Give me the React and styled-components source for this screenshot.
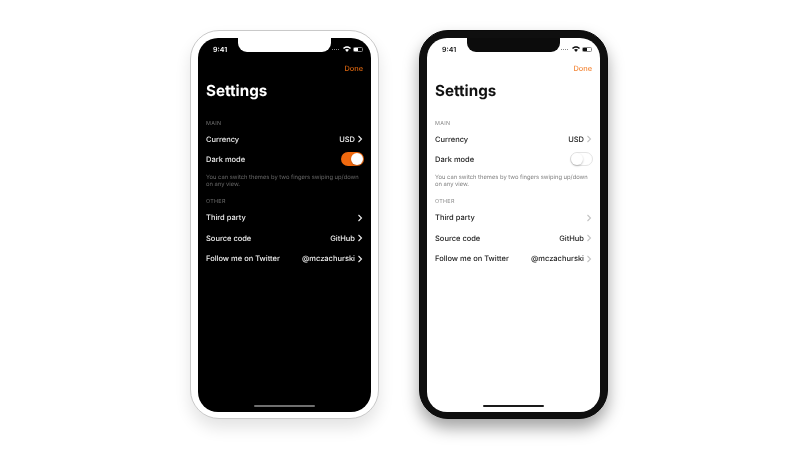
import React from "react";
import styled, { createGlobalStyle } from "styled-components";

const Global = createGlobalStyle`
  html, body { margin: 0; padding: 0; background: #fff; }
  body {
    font-family: "Inter", "Liberation Sans", sans-serif;
    text-rendering: geometricPrecision;
  }
`;

const Stage = styled.div`
  width: 800px;
  height: 450px;
  display: flex;
  justify-content: center;
  align-items: flex-start;
  gap: 40px;
  padding: 30px 2px 0 0;
  box-sizing: border-box;
  overflow: hidden;
`;

const Phone = styled.div`
  width: 189px;
  height: 389px;
  box-sizing: border-box;
  padding: 7px 7px 6px;
  border-radius: 29px;
  flex-shrink: 0;
  background: ${p => (p.$dark ? "#fff" : "#0f0f0f")};
  border: ${p => (p.$dark ? "1px solid #c9c9c9" : "1px solid #0a0a0a")};
  box-shadow: ${p =>
    p.$dark
      ? "0 9px 16px rgba(0,0,0,0.11)"
      : "0 9px 16px rgba(0,0,0,0.36)"};
`;

const Screen = styled.div`
  position: relative;
  height: 100%;
  border-radius: 20px;
  overflow: hidden;
  box-sizing: border-box;
  padding: 0 8px;
  display: flex;
  flex-direction: column;
  will-change: transform;
  background: ${p => (p.$dark ? "#000" : "#fff")};
  color: ${p => (p.$dark ? "#fff" : "#111")};
`;

const Notch = styled.div`
  position: absolute;
  top: 0;
  left: 40px;
  width: 93px;
  height: 14px;
  border-radius: 0 0 9px 9px;
  background: ${p => (p.$dark ? "#fff" : "#0c0c0c")};
`;

const StatusBar = styled.div`
  height: 22px;
  display: flex;
  align-items: center;
  justify-content: space-between;
  padding: 0 0 0 7px;
  font-size: 7px;
  font-weight: 600;
`;

const StatusIcons = styled.div`
  display: flex;
  align-items: center;
  gap: 2px;
`;

const Dots = styled.span`
  width: 8px;
  height: 1px;
  margin-right: 1px;
  background: repeating-linear-gradient(90deg, #888 0 1px, transparent 1px 2px);
`;

const Battery = styled.span`
  width: 10px;
  height: 5px;
  border: 0.5px solid #888;
  border-radius: 1.5px;
  box-sizing: border-box;
  display: flex;
  &::before {
    content: "";
    width: 4px;
    background: ${p => (p.$dark ? "#fff" : "#111")};
  }
`;

const DoneBar = styled.div`
  display: flex;
  justify-content: flex-end;
  margin-top: 3px;
  height: 12px;
  line-height: 12px;
  font-size: 7.4px;
  font-weight: 500;
  color: ${p => (p.$dark ? "#d9640f" : "#f4883a")};
`;

const Title = styled.h1`
  margin: 4px 0 0;
  font-size: 15.2px;
  line-height: 24px;
  font-weight: 700;
`;

const SectionLabel = styled.div`
  font-size: 5.4px;
  line-height: 8px;
  letter-spacing: 0.3px;
  margin-bottom: 1.5px;
  color: ${p => (p.$dark ? "#6f6f6f" : "#8a8a8a")};
  margin-top: ${p => p.$top}px;
`;

const Row = styled.div`
  height: ${p => p.$h || 20}px;
  display: flex;
  align-items: center;
  justify-content: space-between;
  font-size: 7.5px;
  font-weight: 500;
  color: ${p => (p.$dark ? "#f2f2f2" : "#1a1a1a")};
`;

const RowRight = styled.div`
  display: flex;
  align-items: center;
  gap: 2px;
`;

const Chevron = styled.svg`
  width: 6px;
  height: 8px;
  color: ${p => (p.$dark ? "#eee" : "#c4c4c4")};
`;

const Toggle = styled.div`
  width: 23px;
  height: 14px;
  border-radius: 7px;
  box-sizing: border-box;
  margin-right: -1px;
  display: flex;
  justify-content: ${p => (p.$on ? "flex-end" : "flex-start")};
  background: ${p => (p.$on ? "#f0690f" : "#fff")};
  border: ${p => (p.$on ? "none" : "1px solid #e4e4e4")};
  padding: ${p => (p.$on ? "1px" : "0")};
`;

const Knob = styled.div`
  width: 12px;
  height: 12px;
  border-radius: 50%;
  background: #fff;
  box-shadow: 0 1px 2px rgba(0, 0, 0, 0.25);
`;

const Hint = styled.div`
  font-size: 5.8px;
  line-height: 7.4px;
  margin-top: 5px;
  color: ${p => (p.$dark ? "#6a6a6a" : "#7d7d7d")};
`;

const HomeBar = styled.div`
  position: absolute;
  left: 56px;
  bottom: 5px;
  width: 61px;
  height: 2px;
  border-radius: 1px;
  background: ${p => (p.$dark ? "#6f6f6f" : "#1a1a1a")};
`;

const Arrow = ({ dark }) => (
  <Chevron $dark={dark} viewBox="0 0 6 8" fill="none">
    <path d="M1.5 1 L4.5 4 L1.5 7" stroke="currentColor" strokeWidth="1.1" />
  </Chevron>
);

const Wifi = ({ dark }) => (
  <svg width="8" height="6" viewBox="0 0 8 6" fill={dark ? "#fff" : "#111"}>
    <path d="M0 2 C2.3 -0.2 5.7 -0.2 8 2 L7 3 C5.2 1.4 2.8 1.4 1 3 Z" />
    <path d="M2 3.8 C3.2 2.8 4.8 2.8 6 3.8 L4 6 Z" />
  </svg>
);

const LinkRow = ({ dark, label, value, h }) => (
  <Row $dark={dark} $h={h}>
    <span>{label}</span>
    <RowRight>
      {value && <span>{value}</span>}
      <Arrow dark={dark} />
    </RowRight>
  </Row>
);

const Device = ({ dark }) => (
  <Phone $dark={dark}>
    <Screen $dark={dark}>
      <Notch $dark={dark} />
      <StatusBar>
        <span>9:41</span>
        <StatusIcons>
          <Dots />
          <Wifi dark={dark} />
          <Battery $dark={dark} />
        </StatusIcons>
      </StatusBar>
      <DoneBar $dark={dark}>Done</DoneBar>
      <Title>Settings</Title>
      <SectionLabel $dark={dark} $top={16.5}>MAIN</SectionLabel>
      <LinkRow dark={dark} label="Currency" value="USD" />
      <Row $dark={dark}>
        <span>Dark mode</span>
        <Toggle $on={dark}>
          <Knob $on={dark} />
        </Toggle>
      </Row>
      <Hint $dark={dark}>
        You can switch themes by two fingers swiping up/down on any view.
      </Hint>
      <SectionLabel $dark={dark} $top={9}>OTHER</SectionLabel>
      <LinkRow dark={dark} label="Third party" h={20.5} />
      <LinkRow dark={dark} label="Source code" value="GitHub" h={20.5} />
      <LinkRow dark={dark} label="Follow me on Twitter" value="@mczachurski" h={20.5} />
      <HomeBar $dark={dark} />
    </Screen>
  </Phone>
);

export default function App() {
  return (
    <>
      <Global />
      <Stage>
        <Device dark />
        <Device />
      </Stage>
    </>
  );
}
